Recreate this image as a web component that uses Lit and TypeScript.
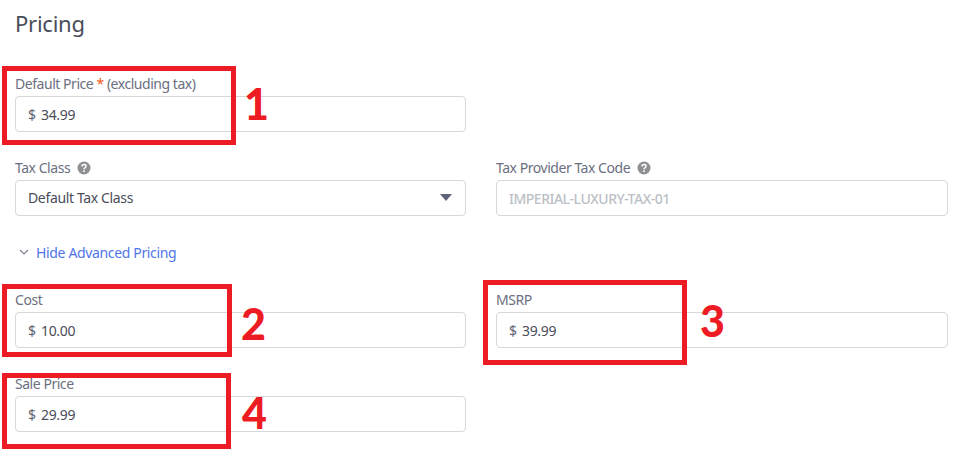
import { LitElement, html, css } from "lit";
import { customElement } from "lit/decorators.js";

const help = html`<svg class="help" viewBox="0 0 14 14" width="14" height="14" aria-hidden="true"><circle cx="7" cy="7" r="6.5" fill="#8c8f94"/><path d="M5 5.4c0-1.2.9-1.9 2-1.9s2 .7 2 1.7c0 1.5-1.9 1.4-1.9 3" fill="none" stroke="#fff" stroke-width="1.5"/><rect x="6.2" y="9.3" width="1.7" height="1.6" fill="#fff"/></svg>`;

const marks = [
  { n: "1", box: [2, 66, 234, 79], num: [244, 77] },
  { n: "2", box: [2, 284, 230, 73], num: [241, 297] },
  { n: "3", box: [483, 280, 204, 85], num: [700, 294] },
  { n: "4", box: [2, 373, 229, 76], num: [242, 386] },
];

@customElement("app-root")
export class AppRoot extends LitElement {
  static styles = css`
    :host { display: block; position: relative; width: 966px; height: 451px; overflow: hidden; background: #fff;
      font-family: "Noto Sans", "Open Sans", sans-serif; color: #4a4d59; }
    .page { padding: 7px 18px 0 15px; }
    h1 { margin: 0 0 35px; font-size: 22px; line-height: 32px; font-weight: 400; letter-spacing: -0.25px; color: #4a4e5a; }
    .grid { display: grid; grid-template-columns: 451px 452px; column-gap: 30px; }
    .field { display: flex; flex-direction: column; height: 84px; }
    label { box-sizing: border-box; height: 22px; padding-bottom: 2px; line-height: 18px; font-size: 14px; letter-spacing: -0.46px; color: #6b6f80; display: flex; align-items: center; gap: 4px; white-space: pre; }
    .req { color: #f05a22; }
    .box { box-sizing: border-box; height: 36px; border: 1px solid #d6d8dc; border-radius: 4px; display: flex; align-items: center; padding: 0 12px; font-size: 14px; letter-spacing: -0.35px; color: #4a4d59; background: #fff; }
    .cur { color: #5e6270; width: 13px; font-weight: 400; }
    .sel { justify-content: space-between; padding: 0 13px 1px 12px; }
    .caret { width: 0; height: 0; border-left: 6.5px solid transparent; border-right: 6.5px solid transparent; border-top: 7px solid #5e637a; }
    .ph { color: #bcbfc6; letter-spacing: -0.5px; font-weight: 500; }
    .help { flex: none; }
    .toggle { height: 20px; margin-bottom: 28px; display: flex; align-items: center; gap: 7px; padding-left: 4px; font-size: 14px; letter-spacing: -0.35px; color: #4f75e8; }
    .mark { position: absolute; box-sizing: border-box; border: 5px solid #ed1c24; }
    .num { position: absolute; font-family: "Lato", sans-serif; font-weight: 900; font-size: 43px; line-height: 54px; color: #ed1c24; }
  `;

  private money(label: string, value: string) {
    return html`<div class="field"><label>${label}</label><div class="box"><span class="cur">$</span><span>${value}</span></div></div>`;
  }

  render() {
    return html`<div class="page">
        <h1>Pricing</h1>
        <div class="grid">
          <div class="field"><label><span>Default Price <span class="req">*</span> (excluding tax)</span></label><div class="box"><span class="cur">$</span><span>34.99</span></div></div>
          <div></div>
          <div class="field"><label>Tax Class ${help}</label><div class="box sel"><span>Default Tax Class</span><span class="caret"></span></div></div>
          <div class="field"><label>Tax Provider Tax Code ${help}</label><div class="box ph">IMPERIAL-LUXURY-TAX-01</div></div>
        </div>
        <div class="toggle">
          <svg width="10" height="6" viewBox="0 0 10 6" aria-hidden="true"><path d="M1 1l4 4 4-4" fill="none" stroke="#7b8090" stroke-width="1.1"/></svg>
          <span>Hide Advanced Pricing</span>
        </div>
        <div class="grid">
          ${this.money("Cost", "10.00")}
          ${this.money("MSRP", "39.99")}
          ${this.money("Sale Price", "29.99")}
        </div>
      </div>
      ${marks.map((m) => html`<div class="mark" style="left:${m.box[0]}px;top:${m.box[1]}px;width:${m.box[2]}px;height:${m.box[3]}px"></div>
        <div class="num" style="left:${m.num[0]}px;top:${m.num[1]}px">${m.n}</div>`)}`;
  }
}
